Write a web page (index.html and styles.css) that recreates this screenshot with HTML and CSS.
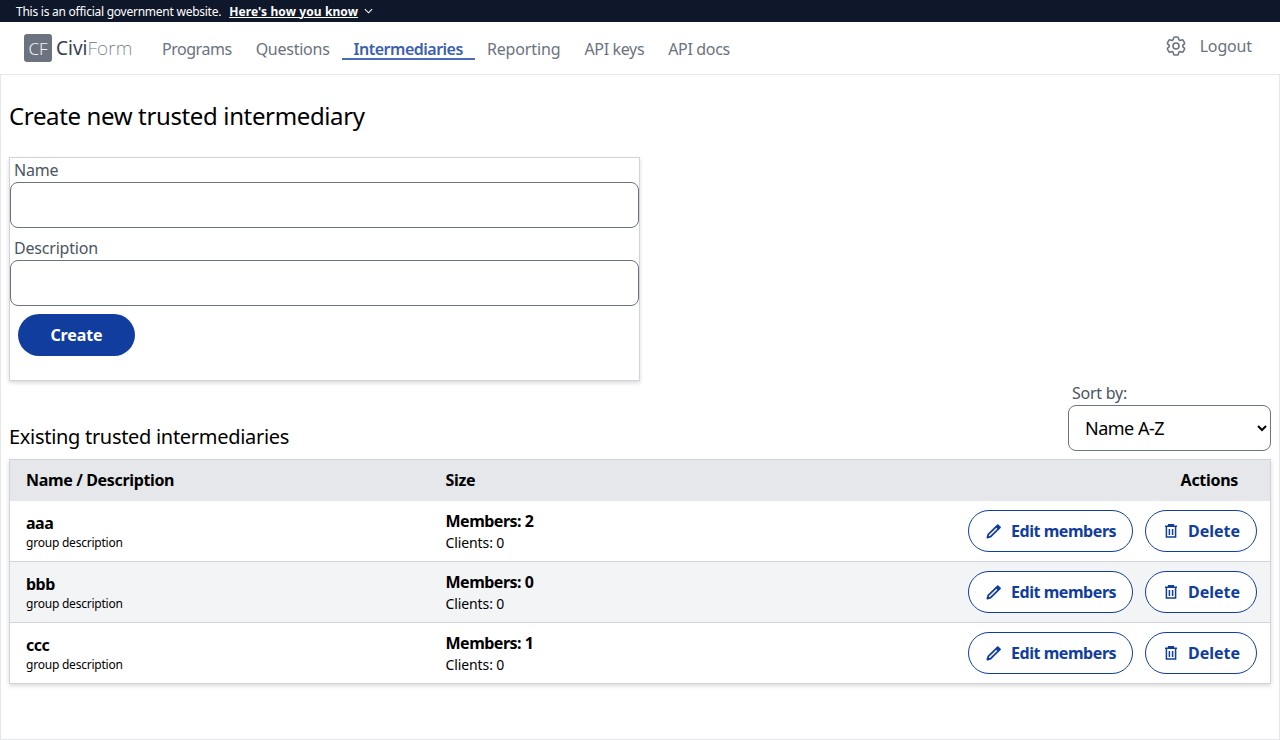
FILE: index.html
```html
<!DOCTYPE html>
<html lang="en">
<head>
  <meta charset="UTF-8">
  <title>CiviForm</title>
  <link rel="stylesheet" href="styles.css">
</head>
<body>
  <svg class="sprite" width="0" height="0">
    <symbol id="icon-pencil" viewBox="0 0 16 16">
      <path d="M12.8 2.1l2.2 2.2-9.4 9.4-3.2.9.9-3.2z" fill="none" stroke="currentColor" stroke-width="1.8" stroke-linejoin="round"/>
      <path d="M11.4 3.2l2.7 2.7" fill="none" stroke="currentColor" stroke-width="2.4"/>
    </symbol>
    <symbol id="icon-trash" viewBox="0 0 16 16">
      <path d="M3 3.2h12M6.6 3V1.8h4.8V3M4.4 3.2v10.8h9.2V3.2M7.4 6v6M10.6 6v6" fill="none" stroke="currentColor" stroke-width="1.5"/>
    </symbol>
  </svg>
  <div class="gov-banner">
    <span class="gov-text">This is an official government website.</span>
    <a class="gov-link" href="#">Here's how you know</a>
    <svg class="gov-chevron" viewBox="0 0 10 6" width="9" height="6"><path d="M1 1l4 4 4-4" fill="none" stroke="#fff" stroke-width="1.2"/></svg>
  </div>
  <nav class="nav">
    <div class="logo">
      <span class="logo-mark">CF</span>
      <span class="logo-text"><span class="logo-civi">Civi</span>Form</span>
    </div>
    <div class="nav-links">
      <a href="#" class="programs">Programs</a>
      <a href="#" class="questions">Questions</a>
      <a href="#" class="active">Intermediaries</a>
      <a href="#" class="reporting">Reporting</a>
      <a href="#">API keys</a>
      <a href="#">API docs</a>
    </div>
    <div class="nav-right">
      <svg class="gear" viewBox="0 0 24 24" width="24" height="24" fill="none" stroke="#6b7280" stroke-width="1.6" stroke-linecap="round" stroke-linejoin="round"><path d="M9.594 3.94c.09-.542.56-.94 1.11-.94h2.593c.55 0 1.02.398 1.11.94l.213 1.281c.063.374.313.686.645.87.074.04.147.083.22.127.325.196.72.257 1.075.124l1.217-.456a1.125 1.125 0 0 1 1.37.49l1.296 2.247a1.125 1.125 0 0 1-.26 1.431l-1.003.827c-.293.241-.438.613-.43.992a7.723 7.723 0 0 1 0 .255c-.008.378.137.75.43.991l1.004.827c.424.35.534.955.26 1.43l-1.298 2.247a1.125 1.125 0 0 1-1.369.491l-1.217-.456c-.355-.133-.75-.072-1.076.124a6.47 6.47 0 0 1-.22.128c-.331.183-.581.495-.644.869l-.213 1.281c-.09.543-.56.94-1.11.94h-2.594c-.55 0-1.019-.398-1.11-.94l-.213-1.281c-.062-.374-.312-.686-.644-.87a6.52 6.52 0 0 1-.22-.127c-.325-.196-.72-.257-1.076-.124l-1.217.456a1.125 1.125 0 0 1-1.369-.49l-1.297-2.247a1.125 1.125 0 0 1 .26-1.431l1.004-.827c.292-.24.437-.613.43-.991a6.932 6.932 0 0 1 0-.255c.007-.38-.138-.751-.43-.992l-1.004-.827a1.125 1.125 0 0 1-.26-1.43l1.297-2.247a1.125 1.125 0 0 1 1.37-.491l1.216.456c.356.133.751.072 1.076-.124.072-.044.146-.086.22-.128.332-.183.582-.495.644-.869l.214-1.28Z"/><circle cx="12" cy="12" r="3"/></svg>
      <a href="#" class="logout">Logout</a>
    </div>
  </nav>
  <main class="main">
    <h1 class="page-title">Create new trusted intermediary</h1>
    <form class="create-form">
      <label class="field-label" for="name">Name</label>
      <input class="field-input" id="name" type="text">
      <label class="field-label second" for="description">Description</label>
      <input class="field-input" id="description" type="text">
      <button class="btn-create" type="button">Create</button>
    </form>
    <div class="list-head">
      <h2 class="list-title">Existing trusted intermediaries</h2>
      <div class="sort">
        <label class="sort-label" for="sort">Sort by:</label>
        <select class="sort-select" id="sort"><option>Name A-Z</option></select>
      </div>
    </div>
    <table class="groups">
      <thead>
        <tr>
          <th class="col-name">Name / Description</th>
          <th class="col-size">Size</th>
          <th class="col-actions">Actions</th>
        </tr>
      </thead>
      <tbody>
        <tr>
          <td><div class="strong">aaa</div><div class="small">group description</div></td>
          <td><div class="strong">Members: 2</div><div class="clients">Clients: 0</div></td>
          <td>
            <div class="row-actions">
              <button class="btn-outline edit" type="button"><svg class="btn-icon"><use href="#icon-pencil"/></svg>Edit members</button>
              <button class="btn-outline delete" type="button"><svg class="btn-icon"><use href="#icon-trash"/></svg>Delete</button>
            </div>
          </td>
        </tr>
        <tr>
          <td><div class="strong">bbb</div><div class="small">group description</div></td>
          <td><div class="strong">Members: 0</div><div class="clients">Clients: 0</div></td>
          <td>
            <div class="row-actions">
              <button class="btn-outline edit" type="button"><svg class="btn-icon"><use href="#icon-pencil"/></svg>Edit members</button>
              <button class="btn-outline delete" type="button"><svg class="btn-icon"><use href="#icon-trash"/></svg>Delete</button>
            </div>
          </td>
        </tr>
        <tr>
          <td><div class="strong">ccc</div><div class="small">group description</div></td>
          <td><div class="strong">Members: 1</div><div class="clients">Clients: 0</div></td>
          <td>
            <div class="row-actions">
              <button class="btn-outline edit" type="button"><svg class="btn-icon"><use href="#icon-pencil"/></svg>Edit members</button>
              <button class="btn-outline delete" type="button"><svg class="btn-icon"><use href="#icon-trash"/></svg>Delete</button>
            </div>
          </td>
        </tr>
      </tbody>
    </table>
  </main>
</body>
</html>
```
FILE: styles.css
```css
* {
  box-sizing: border-box;
}
html, body {
  height: 100%;
}
body {
  margin: 0;
  background: #fff;
  font-family: "Noto Sans", "Open Sans", sans-serif;
  font-size: 16px;
  color: #000;
  display: flex;
  flex-direction: column;
}
.sprite {
  position: absolute;
}
.gov-banner {
  height: 22px;
  background: #0f172a;
  color: #fff;
  font-size: 12px;
  padding-left: 16px;
  display: flex;
  align-items: center;
  flex: none;
}
.gov-text {
  letter-spacing: -.25px;
}
.gov-link {
  color: #fff;
  font-weight: 700;
  margin-left: 8px;
  letter-spacing: .1px;
}
.gov-chevron {
  margin-left: 6px;
}
.nav {
  height: 52px;
  flex: none;
  display: flex;
  align-items: center;
  padding: 0 28px 0 24px;
}
.logo {
  display: flex;
  align-items: center;
  width: 126px;
  flex: none;
}
.logo-mark {
  width: 28px;
  height: 28px;
  background: #6b7280;
  border-radius: 3px;
  color: #f3f4f6;
  font-size: 17px;
  font-weight: 300;
  display: flex;
  align-items: center;
  justify-content: center;
}
.logo-text {
  margin-left: 4px;
  font-size: 19px;
  font-weight: 200;
  color: #6b7280;
  letter-spacing: .2px;
}
.logo-civi {
  color: #374151;
  font-weight: 400;
  letter-spacing: 0;
}
.nav-links {
  display: flex;
  flex: 1;
}
.nav-links a {
  color: #6b7280;
  text-decoration: none;
  padding: 0 12px;
  line-height: 22px;
  margin-top: 2px;
  letter-spacing: -.35px;
}
.nav-links a.programs {
  letter-spacing: -.47px;
}
.nav-links a.questions {
  letter-spacing: -.25px;
}
.nav-links a.reporting {
  letter-spacing: -.13px;
}
.nav-links a.active {
  color: #3b5fae;
  font-weight: 600;
  box-shadow: inset 0 -2px 0 #4a6cb8;
  letter-spacing: -.5px;
}
.nav-right {
  display: flex;
  align-items: center;
  margin-top: -4px;
}
.gear {
  display: block;
}
.logout {
  margin-left: 12px;
  color: #6b7280;
  text-decoration: none;
  letter-spacing: -.15px;
}
.main {
  flex: 1;
  border: 1px solid #e5e7eb;
  padding: 0 8px;
}
.page-title {
  font-size: 24px;
  font-weight: 400;
  line-height: 32px;
  margin: 25px 0;
  letter-spacing: -.36px;
}
.create-form {
  width: 631px;
  height: 224px;
  border: 1px solid #d1d5db;
  box-shadow: 0 2px 4px rgba(0, 0, 0, .15);
}
.field-label {
  display: block;
  color: #4b5563;
  line-height: 24px;
  padding-left: 4px;
  letter-spacing: -.2px;
}
.field-label.second {
  margin-top: 8px;
}
.field-input {
  display: block;
  width: 629px;
  height: 46px;
  border: 1px solid #6b7280;
  border-radius: 8px;
  background: #fff;
}
.btn-create {
  display: block;
  margin: 8px 0 0 8px;
  width: 117px;
  height: 42px;
  border: 0;
  border-radius: 21px;
  background: #113d9e;
  color: #fff;
  font: 700 16px "Noto Sans", sans-serif;
  letter-spacing: -.1px;
}
.list-head {
  display: flex;
  justify-content: space-between;
  align-items: flex-end;
  height: 70px;
  margin-bottom: 8px;
}
.list-title {
  font-size: 20px;
  font-weight: 400;
  line-height: 28px;
  margin: 0;
  letter-spacing: -.3px;
}
.sort {
  width: 203px;
}
.sort-label {
  display: block;
  color: #4b5563;
  line-height: 24px;
  padding-left: 4px;
  letter-spacing: -.25px;
}
.sort-select {
  display: block;
  width: 203px;
  height: 46px;
  border: 1px solid #6b7280;
  border-radius: 8px;
  background: #fff;
  padding-left: 12px;
  font: 18px "Noto Sans", sans-serif;
  letter-spacing: -.5px;
  color: #000;
}
.groups {
  width: 1262px;
  border-collapse: collapse;
  table-layout: fixed;
  border: 1px solid #d1d5db;
  box-shadow: 0 2px 4px rgba(0, 0, 0, .15);
}
.groups th {
  height: 41px;
  background: #e5e7eb;
  font-weight: 700;
  text-align: left;
  padding: 0 16px;
  letter-spacing: -.35px;
}
.col-name {
  width: 420px;
}
.col-size {
  width: 420px;
}
.groups .col-actions {
  text-align: right;
  padding-right: 32px;
  letter-spacing: -.3px;
}
.groups td {
  height: 61px;
  padding: 0 16px;
  border-bottom: 1px solid #d1d5db;
}
.groups td:last-child {
  padding-right: 13px;
}
.groups tr:nth-child(even) td {
  background: #f3f4f6;
}
.strong {
  font-weight: 700;
  line-height: 20px;
  margin-top: 2px;
  letter-spacing: -.5px;
}
.small {
  font-size: 12px;
  line-height: 16px;
  margin-top: 2px;
  letter-spacing: -.22px;
}
.clients {
  font-size: 14px;
  line-height: 20px;
  margin-top: 2px;
  letter-spacing: -.1px;
}
.row-actions {
  display: flex;
  justify-content: flex-end;
  gap: 12px;
}
.btn-outline {
  height: 42px;
  padding: 0 16px;
  border: 1px solid #113d9e;
  border-radius: 21px;
  background: #fff;
  color: #113d9e;
  font: 700 16px "Noto Sans", sans-serif;
  display: inline-flex;
  align-items: center;
  gap: 10px;
  white-space: nowrap;
}
.btn-icon {
  width: 16px;
  height: 16px;
  flex: none;
}
.btn-outline.edit {
  width: 165px;
  letter-spacing: -.45px;
}
.btn-outline.delete {
  width: 112px;
  letter-spacing: 0;
}
```
